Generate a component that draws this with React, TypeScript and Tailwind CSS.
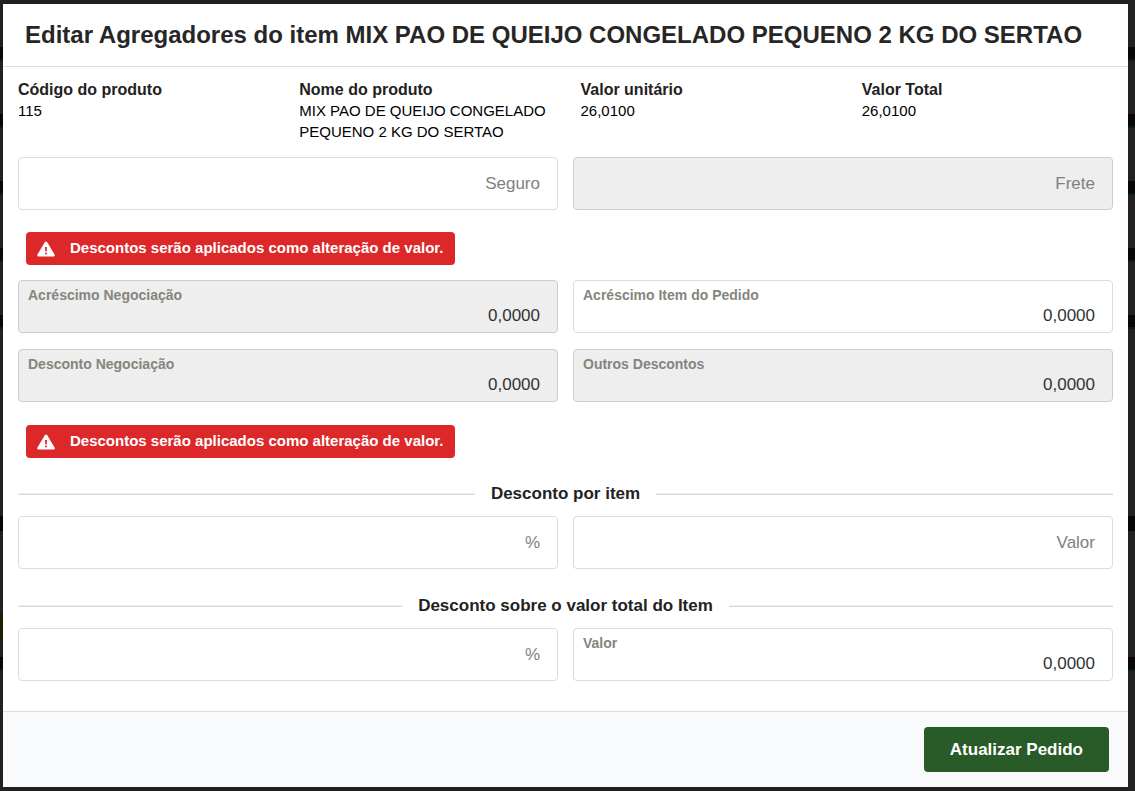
import React, { useState } from 'react';

const product = [
  { label: 'Código do produto', value: '115' },
  { label: 'Nome do produto', value: 'MIX PAO DE QUEIJO CONGELADO PEQUENO 2 KG DO SERTAO' },
  { label: 'Valor unitário', value: '26,0100' },
  { label: 'Valor Total', value: '26,0100' }
];

// Space left under each dark bar of the page behind the dialog
const backdropRows = ['h-[53px]', 'h-[53px]', 'h-[53px]', 'h-[53px]', 'h-[187px]'];

type FieldProps = {
  id: string;
  label: string;
  initial?: string;
  disabled?: boolean;
};

const Field = ({ id, label, initial = '', disabled = false }: FieldProps) => {
  const [value, setValue] = useState(initial);
  const filled = value !== '';

  return (
    <div
      className={`relative h-[53px] rounded border ${
        disabled ? 'bg-[#eeeeee] border-[#cccccc]' : 'bg-white border-[#dddddd]'
      }`}
    >
      {/* The label sits in the field until there is a value, then floats to the top */}
      <label
        htmlFor={id}
        className={`absolute pointer-events-none ${
          filled
            ? 'left-[9px] top-1 text-sm leading-5 font-bold text-[#85857d]'
            : 'right-[17px] top-[14px] text-[17px] leading-6 text-[#808080]'
        }`}
      >
        {label}
      </label>
      <input
        id={id}
        type="text"
        value={value}
        disabled={disabled}
        onChange={(e) => setValue(e.target.value)}
        className="block w-full h-full px-[17px] pt-[18px] bg-transparent text-right text-[17px] text-[#333333] outline-none"
      />
    </div>
  );
};

const WarningIcon = () => (
  <svg viewBox="0 0 18 16" className="w-[18px] h-4" aria-hidden="true">
    <path
      d="M7.9 1.1a1.3 1.3 0 0 1 2.2 0l7.6 12.6a1.1 1.1 0 0 1-1 1.7H1.3a1.1 1.1 0 0 1-1-1.7z"
      fill="currentColor"
    />
    <path d="M8 6h2l-.3 4.6H8.3z" fill="#dc2828" />
    <circle cx="9" cy="12.4" r="1" fill="#dc2828" />
  </svg>
);

const Warning = () => (
  <div className="flex">
    <div
      role="alert"
      className="ml-2 h-[33px] pl-[11px] pr-3 flex items-center gap-[15px] rounded bg-[#dc2828] text-white text-[15px] font-bold"
    >
      <WarningIcon />
      <span>Descontos serão aplicados como alteração de valor.</span>
    </div>
  </div>
);

const Divider = ({ children }: { children: React.ReactNode }) => (
  <div className="flex items-center gap-4">
    <div className="flex-1 h-[2px] bg-[#eeeeee] border-b border-[#d9d9d9]"></div>
    <h3 className="text-[17px] leading-6 font-bold text-[#222222]">{children}</h3>
    <div className="flex-1 h-[2px] bg-[#eeeeee] border-b border-[#d9d9d9]"></div>
  </div>
);

const App = () => {
  return (
    <div className="relative min-h-screen pt-1 pb-1 pl-[3px] pr-[7px] bg-[#212121] font-['Liberation_Sans',Arial,sans-serif]">
      {/* Dimmed page behind the dialog */}
      <div aria-hidden="true" className="absolute inset-0 pt-[47px] overflow-hidden">
        {backdropRows.map((space, index) => (
          <div key={index}>
            <div className="h-[14px] bg-[#080808] border-b-2 border-[#04210a]"></div>
            <div className={space}></div>
          </div>
        ))}
        <div className="h-[15px] bg-[#050505]"></div>
        <div className="h-[126px] pt-[82px]">
          <div className="w-1 h-[26px] bg-[#1c1f00]"></div>
        </div>
        <div className="h-[14px] bg-[#080808] border-b-2 border-[#04210a]"></div>
      </div>

      <div role="dialog" aria-labelledby="dialog-title" className="relative bg-white">
        <header className="px-[22px] py-[13px] border-b border-[#dddddd]">
          <h2 id="dialog-title" className="text-2xl leading-9 font-bold text-[#262626]">
            Editar Agregadores do item MIX PAO DE QUEIJO CONGELADO PEQUENO 2 KG DO SERTAO
          </h2>
        </header>

        <form id="aggregators" onSubmit={(e) => e.preventDefault()}>
          <dl className="grid grid-cols-4 pt-3">
            {product.map((item) => (
              <div key={item.label} className="px-[15px]">
                <dt className="text-base leading-[21px] font-bold text-[#222222]">{item.label}</dt>
                <dd className="text-[15px] leading-[21px] text-black">{item.value}</dd>
              </div>
            ))}
          </dl>

          <div className="px-[15px] pt-[15px] pb-[30px]">
            <div className="grid grid-cols-2 gap-[15px] mb-[22px]">
              <Field id="seguro" label="Seguro" />
              <Field id="frete" label="Frete" disabled />
            </div>

            <Warning />

            <div className="grid grid-cols-2 gap-x-[15px] gap-y-4 mt-[15px] mb-[23px]">
              <Field id="acrescimo-negociacao" label="Acréscimo Negociação" initial="0,0000" disabled />
              <Field id="acrescimo-item" label="Acréscimo Item do Pedido" initial="0,0000" />
              <Field id="desconto-negociacao" label="Desconto Negociação" initial="0,0000" disabled />
              <Field id="outros-descontos" label="Outros Descontos" initial="0,0000" disabled />
            </div>

            <Warning />

            <section className="mt-6">
              <Divider>Desconto por item</Divider>
              <div className="grid grid-cols-2 gap-[15px] mt-[10px]">
                <Field id="item-percentual" label="%" />
                <Field id="item-valor" label="Valor" />
              </div>
            </section>

            <section className="mt-[25px]">
              <Divider>Desconto sobre o valor total do Item</Divider>
              <div className="grid grid-cols-2 gap-[15px] mt-[10px]">
                <Field id="total-percentual" label="%" />
                <Field id="total-valor" label="Valor" initial="0,0000" />
              </div>
            </section>
          </div>
        </form>

        <footer className="flex justify-end px-[19px] py-[15px] bg-[#f9fafc] border-t border-[#dddddd]">
          <button
            type="submit"
            form="aggregators"
            className="h-[45px] px-[26px] rounded bg-[#285b28] hover:bg-[#1f4a1f] text-white text-[17px] font-bold"
          >
            Atualizar Pedido
          </button>
        </footer>
      </div>
    </div>
  );
};

export default App;
